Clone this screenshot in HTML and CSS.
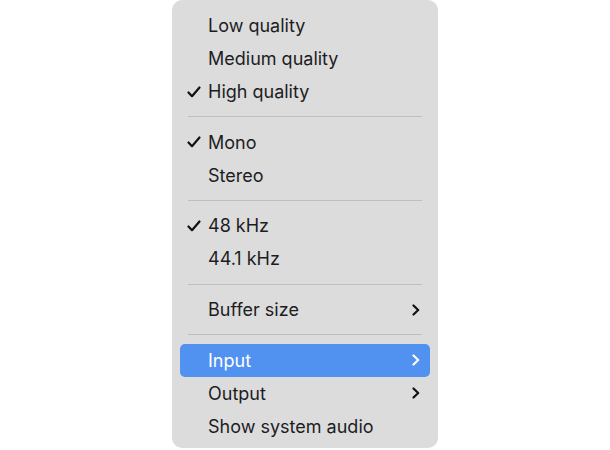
FILE: index.html
```html
<!DOCTYPE html>
<html>
<head>
<meta charset="utf-8">
<link rel="stylesheet" href="styles.css">
</head>
<body>
<div class="stage">
  <div class="menu">
    <div class="item"><span class="check"></span><span class="label">Low quality</span></div>
    <div class="item"><span class="check"></span><span class="label">Medium quality</span></div>
    <div class="item"><span class="check"><svg viewBox="0 0 14 12" width="14" height="12"><path d="M1.5 6.5 L5 10.2 L12.5 1.5" fill="none" stroke="currentColor" stroke-width="2.2" stroke-linecap="round" stroke-linejoin="round"/></svg></span><span class="label">High quality</span></div>
    <div class="sep"></div>
    <div class="item"><span class="check"><svg viewBox="0 0 14 12" width="14" height="12"><path d="M1.5 6.5 L5 10.2 L12.5 1.5" fill="none" stroke="currentColor" stroke-width="2.2" stroke-linecap="round" stroke-linejoin="round"/></svg></span><span class="label">Mono</span></div>
    <div class="item"><span class="check"></span><span class="label">Stereo</span></div>
    <div class="sep"></div>
    <div class="item"><span class="check"><svg viewBox="0 0 14 12" width="14" height="12"><path d="M1.5 6.5 L5 10.2 L12.5 1.5" fill="none" stroke="currentColor" stroke-width="2.2" stroke-linecap="round" stroke-linejoin="round"/></svg></span><span class="label">48 kHz</span></div>
    <div class="item"><span class="check"></span><span class="label">44.1 kHz</span></div>
    <div class="sep"></div>
    <div class="item"><span class="check"></span><span class="label">Buffer size</span><span class="chev"><svg viewBox="0 0 8 12" width="8" height="12"><path d="M1.5 1.5 L6.2 6 L1.5 10.5" fill="none" stroke="currentColor" stroke-width="2.2" stroke-linecap="round" stroke-linejoin="round"/></svg></span></div>
    <div class="sep"></div>
    <div class="item active"><span class="check"></span><span class="label">Input</span><span class="chev"><svg viewBox="0 0 8 12" width="8" height="12"><path d="M1.5 1.5 L6.2 6 L1.5 10.5" fill="none" stroke="currentColor" stroke-width="2.2" stroke-linecap="round" stroke-linejoin="round"/></svg></span></div>
    <div class="item"><span class="check"></span><span class="label">Output</span><span class="chev"><svg viewBox="0 0 8 12" width="8" height="12"><path d="M1.5 1.5 L6.2 6 L1.5 10.5" fill="none" stroke="currentColor" stroke-width="2.2" stroke-linecap="round" stroke-linejoin="round"/></svg></span></div>
    <div class="item"><span class="check"></span><span class="label">Show system audio</span></div>
  </div>
</div>
</body>
</html>
```

FILE: styles.css
```css
html, body {
  margin: 0;
  padding: 0;
  background: #ffffff;
}
.stage {
  width: 610px;
  height: 450px;
  display: flex;
  justify-content: center;
  align-items: flex-start;
}
.menu {
  width: 266px;
  height: 448px;
  box-sizing: border-box;
  background: #dcdcdd;
  border-radius: 10px;
  padding: 9px 8px 5px 8px;
  display: flex;
  flex-direction: column;
  font-family: Inter, "Noto Sans", sans-serif;
  font-size: 18px;
  color: #1d1d1f;
}
.item {
  height: 33px;
  display: flex;
  align-items: center;
  border-radius: 5px;
  padding: 0 10px 0 7px;
  flex-shrink: 0;
}
.item.active {
  background: #5192f0;
  color: #ffffff;
}
.check {
  width: 21px;
  display: flex;
  align-items: center;
  color: #111;
}
.label {
  flex: 1;
}
.chev {
  display: flex;
  align-items: center;
  color: #111;
}
.item.active .chev {
  color: #ffffff;
}
.sep {
  height: 17.7px;
  display: flex;
  align-items: center;
  padding: 0 8px;
  flex-shrink: 0;
}
.sep::before {
  content: "";
  flex: 1;
  height: 1px;
  background: #bfbfc1;
}
```
